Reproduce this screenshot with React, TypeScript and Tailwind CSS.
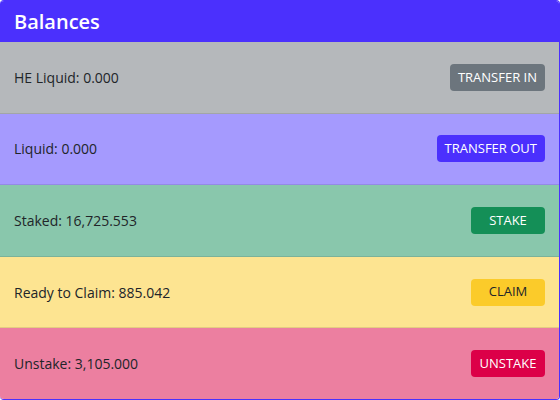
import React from 'react';

const rows = [
  { label: 'HE Liquid: 0.000', action: 'TRANSFER IN', row: 'bg-[#b5b8bb]', btn: 'bg-[#6c757d] text-white' },
  { label: 'Liquid: 0.000', action: 'TRANSFER OUT', row: 'bg-[#a59afe]', btn: 'bg-[#4b30fd] text-white' },
  { label: 'Staked: 16,725.553', action: 'STAKE', row: 'bg-[#89c7ac]', btn: 'bg-[#148f57] text-white' },
  { label: 'Ready to Claim: 885.042', action: 'CLAIM', row: 'bg-[#fde491]', btn: 'bg-[#fbcb2a] text-[#212529]' },
  { label: 'Unstake: 3,105.000', action: 'UNSTAKE', row: 'bg-[#ec7fa0]', btn: 'bg-[#dc0048] text-white' },
];

export default function App() {
  return (
    <div className="w-[560px] h-[400px] bg-white font-['Open_Sans',sans-serif]">
      <div className="h-full flex flex-col rounded-[4px] border border-l-0 border-[#4b30fd] overflow-hidden">
        <div className="h-[41px] shrink-0 bg-[#4b30fd] px-[14px] flex items-center">
          <h2 className="text-white text-[20px] font-semibold leading-none">Balances</h2>
        </div>
        {rows.map((r, i) => (
          <div
            key={r.action}
            className={`flex-1 flex items-center justify-between pl-[14px] pr-[14px] ${r.row} ${i < rows.length - 1 ? 'border-b border-black/10' : ''}`}
          >
            <span className="text-[14px] text-[#212529]">{r.label}</span>
            <button className={`min-w-[74px] h-[27px] px-[8px] rounded-[4px] text-[13px] ${r.btn}`}>
              {r.action}
            </button>
          </div>
        ))}
      </div>
    </div>
  );
}
